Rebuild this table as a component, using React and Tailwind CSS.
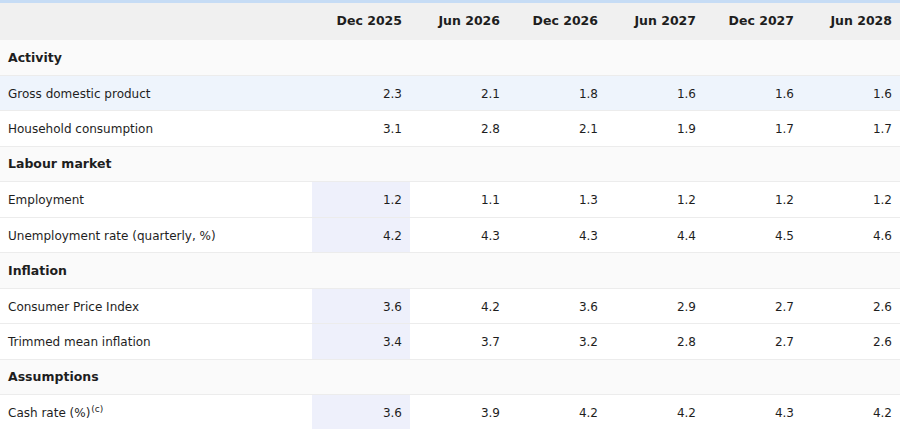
const COLUMNS = ['Dec 2025', 'Jun 2026', 'Dec 2026', 'Jun 2027', 'Dec 2027', 'Jun 2028'];

const SECTIONS = [
  {
    title: 'Activity',
    rows: [
      { label: 'Gross domestic product', values: ['2.3', '2.1', '1.8', '1.6', '1.6', '1.6'], hover: true },
      { label: 'Household consumption', values: ['3.1', '2.8', '2.1', '1.9', '1.7', '1.7'] },
    ],
  },
  {
    title: 'Labour market',
    rows: [
      { label: 'Employment', values: ['1.2', '1.1', '1.3', '1.2', '1.2', '1.2'], mark: true },
      { label: 'Unemployment rate (quarterly, %)', values: ['4.2', '4.3', '4.3', '4.4', '4.5', '4.6'], mark: true },
    ],
  },
  {
    title: 'Inflation',
    rows: [
      { label: 'Consumer Price Index', values: ['3.6', '4.2', '3.6', '2.9', '2.7', '2.6'], mark: true },
      { label: 'Trimmed mean inflation', values: ['3.4', '3.7', '3.2', '2.8', '2.7', '2.6'], mark: true },
    ],
  },
  {
    title: 'Assumptions',
    rows: [
      { label: 'Cash rate (%)', sup: '(c)', values: ['3.6', '3.9', '4.2', '4.2', '4.3', '4.2'], mark: true },
    ],
  },
];

const grid = 'grid grid-cols-[312px_repeat(6,98px)]';

export default function App() {
  return (
    <div className="w-[900px] bg-white text-[12px] text-[#1e1e1e] font-['DejaVu_Sans',Verdana,sans-serif]">
      <div className="h-[3px] bg-[#c6dcf5]" />
      <div className={`${grid} h-[37px] items-center bg-[#f0f0f0] text-[12.5px] font-bold`}>
        <div />
        {COLUMNS.map((col) => (
          <div key={col} className="pr-2 text-right">
            {col}
          </div>
        ))}
      </div>

      {SECTIONS.map((section) => (
        <div key={section.title}>
          <div className="flex h-[35.5px] items-center border-b border-[#ececec] bg-[#fafafa] pl-2 pt-[2px] text-[12.5px] font-bold">
            {section.title}
          </div>
          {section.rows.map((row) => (
            <div
              key={row.label}
              className={`${grid} h-[35.5px] border-b border-[#ececec] ${row.hover ? 'bg-[#eef4fc]' : 'bg-white'}`}
            >
              <div className="flex items-center pl-2 pt-[2px]">
                {row.label}
                {row.sup && <sup className="ml-px text-[9px]">{row.sup}</sup>}
              </div>
              {row.values.map((value, i) => (
                <div
                  key={i}
                  className={`flex items-center justify-end pr-2 pt-[2px] ${i === 0 && row.mark ? 'bg-[#eef0fb]' : ''}`}
                >
                  {value}
                </div>
              ))}
            </div>
          ))}
        </div>
      ))}
    </div>
  );
}
